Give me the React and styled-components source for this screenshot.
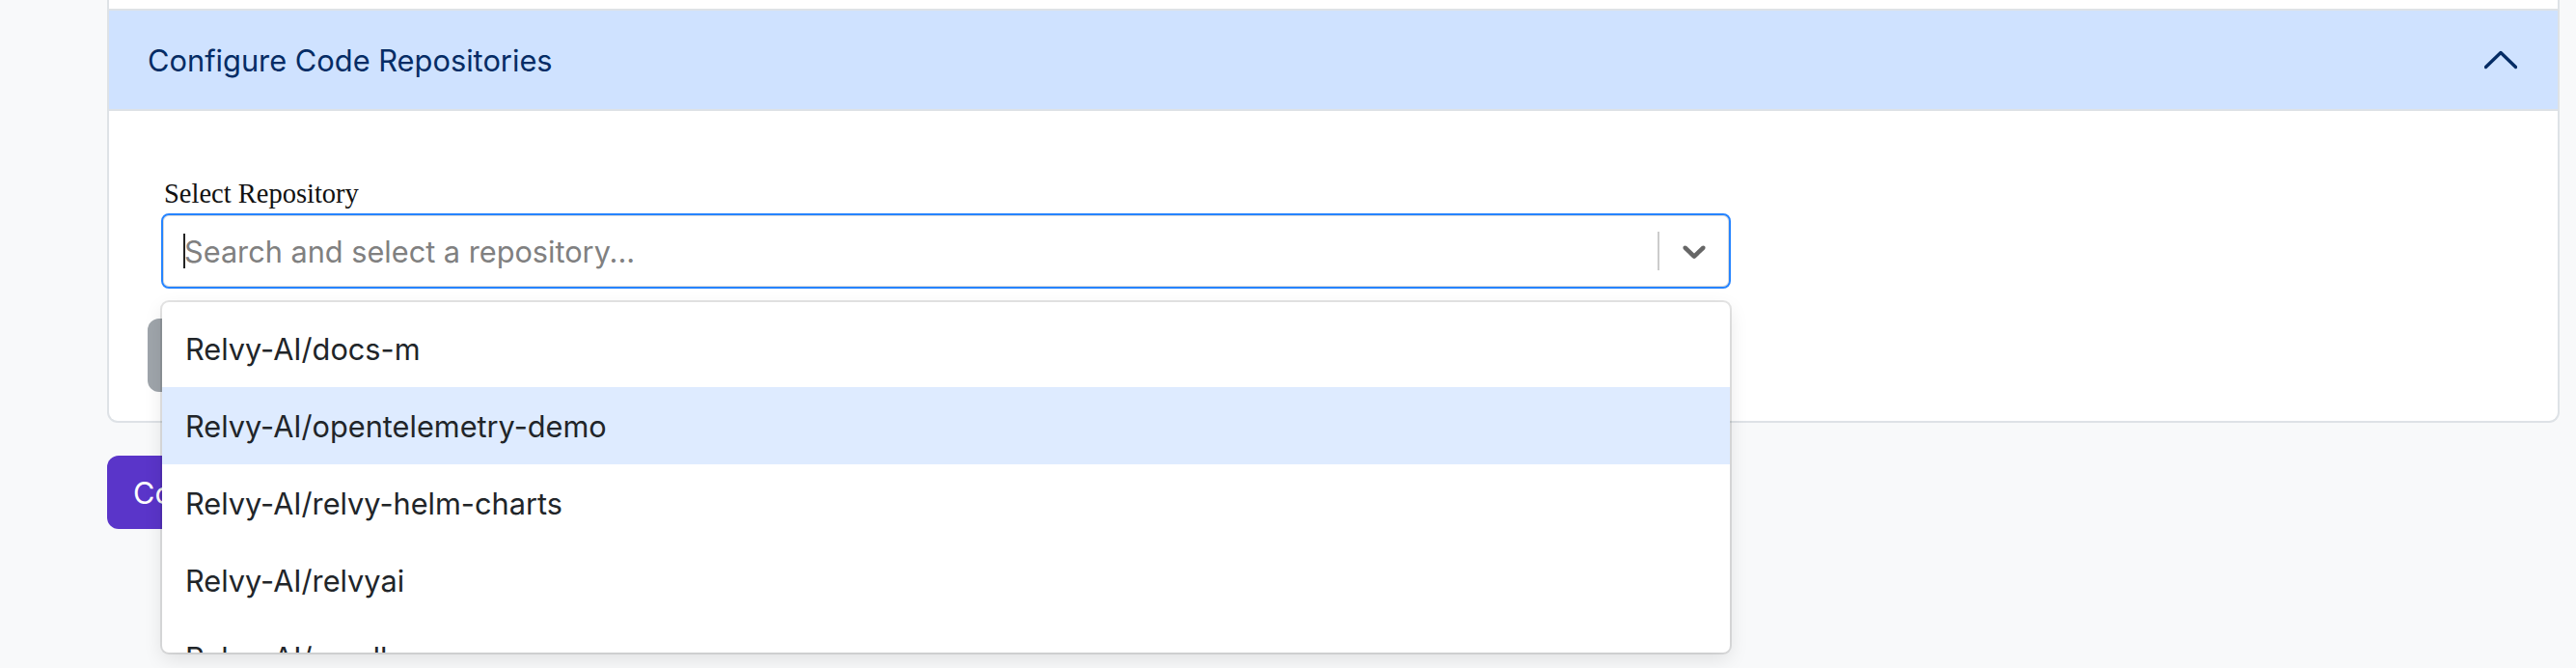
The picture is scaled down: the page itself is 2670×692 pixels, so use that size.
import React from 'react';
import styled, { createGlobalStyle } from 'styled-components';

// Page reset
const GlobalStyle = createGlobalStyle`
  html {
    overflow: hidden;
  }
  html, body {
    margin: 0;
    padding: 0;
    background: #f8f9fa;
  }
  body {
    min-height: 692px;
    font-family: Inter, "Noto Sans", sans-serif;
  }
`;

const Page = styled.div`
  padding: 0 17px 0 111px;
`;

// Accordion card (top of it is scrolled off screen)
const Accordion = styled.div`
  background: #ffffff;
  border: 2px solid #dee2e6;
  border-top: none;
  border-radius: 0 0 11px 11px;
`;

const PrevItemTail = styled.div`
  height: 9px;
`;

const ItemHeader = styled.div`
  display: flex;
  align-items: center;
  justify-content: space-between;
  height: 102px;
  padding: 0 42px 0 40px;
  background: #cfe2ff;
  border-top: 2px solid #dee2e6;
  border-bottom: 2px solid #dee2e6;
  color: #052c65;
  font-size: 30.8px;
`;

const ItemBody = styled.div`
  padding: 70px 40px 30px 40px;
`;

const FormGroup = styled.div`
  padding-left: 14px;
`;

const Label = styled.label`
  display: block;
  margin-bottom: 4px;
  padding-left: 3px;
  font-family: "Liberation Serif", serif;
  font-size: 28.5px;
  line-height: 32px;
  color: #111;
`;

// react-select look-alike
const SelectWrap = styled.div`
  position: relative;
  width: 1627px;
`;

const Control = styled.div`
  display: flex;
  align-items: stretch;
  height: 78px;
  box-sizing: border-box;
  border: 2px solid #2684ff;
  border-radius: 8px;
  box-shadow: inset 0 0 0 1px rgba(0, 0, 0, 0.14);
  background: #fff;
`;

const ValueContainer = styled.div`
  flex: 1;
  display: flex;
  align-items: center;
  padding-left: 21px;
`;

const Caret = styled.span`
  width: 2px;
  height: 36px;
  background: #222;
`;

const Placeholder = styled.span`
  margin-left: -1px;
  font-size: 30.7px;
  color: #808080;
`;

const Separator = styled.span`
  width: 2px;
  margin: 17px 0;
  background: #cccccc;
`;

const Indicator = styled.div`
  display: flex;
  align-items: center;
  padding: 0 16px;
  color: #666666;
`;

const Menu = styled.div`
  position: absolute;
  z-index: 10;
  top: calc(100% + 14px);
  left: 1px;
  right: 1px;
  height: 363px;
  box-sizing: border-box;
  padding-top: 8px;
  overflow: hidden;
  background: #fff;
  border-radius: 7px;
  box-shadow: 0 0 0 2px rgba(0, 0, 0, 0.1), 0 7px 20px rgba(0, 0, 0, 0.1);
`;

const Option = styled.div`
  display: flex;
  align-items: center;
  height: 80px;
  padding: 0 24px;
  font-size: 30.7px;
  color: #212529;
  background: ${(p) => (p.$focused ? '#deebff' : 'transparent')};
`;

const SaveButton = styled.button`
  display: block;
  width: 330px;
  height: 76px;
  margin-top: 31px;
  border: none;
  border-radius: 12px;
  background: #9fa5ab;
  color: #fff;
  font-family: inherit;
  font-size: 30px;
`;

const PrimaryButton = styled.button`
  margin-top: 34px;
  height: 76px;
  padding: 0 27px;
  border: none;
  border-radius: 12px;
  background: #5a35c9;
  color: #ffffff;
  font-family: inherit;
  font-size: 30.7px;
`;

const ChevronUp = () => (
  <svg width="34" height="20" viewBox="0 0 34 20" fill="none">
    <polyline points="1.5,17.5 17,2.5 32.5,17.5" stroke="#052c65" strokeWidth="3.4" strokeLinecap="round" strokeLinejoin="round" />
  </svg>
);

const ChevronDown = () => (
  <svg width="40" height="40" viewBox="0 0 20 20" fill="currentColor">
    <path d="M4.516 7.548c0.436-0.446 1.043-0.481 1.576 0l3.908 3.747 3.908-3.747c0.533-0.481 1.141-0.446 1.574 0 0.436 0.445 0.408 1.197 0 1.615-0.406 0.418-4.695 4.502-4.695 4.502-0.217 0.223-0.502 0.335-0.787 0.335s-0.57-0.112-0.789-0.335c0 0-4.287-4.084-4.695-4.502s-0.436-1.17 0-1.615z" />
  </svg>
);

const repos = [
  'Relvy-AI/docs-m',
  'Relvy-AI/opentelemetry-demo',
  'Relvy-AI/relvy-helm-charts',
  'Relvy-AI/relvyai',
  'Relvy-AI/sandbox',
];

const App = () => {
  return (
    <>
      <GlobalStyle />
      <Page>
        <Accordion>
          <PrevItemTail />
          <ItemHeader>
            <span>Configure Code Repositories</span>
            <ChevronUp />
          </ItemHeader>
          <ItemBody>
            <FormGroup>
              <Label>Select Repository</Label>
              <SelectWrap>
                <Control>
                  <ValueContainer>
                    <Caret />
                    <Placeholder>Search and select a repository...</Placeholder>
                  </ValueContainer>
                  <Separator />
                  <Indicator>
                    <ChevronDown />
                  </Indicator>
                </Control>
                <Menu>
                  {repos.map((name, i) => (
                    <Option key={name} $focused={i === 1}>
                      {name}
                    </Option>
                  ))}
                </Menu>
              </SelectWrap>
            </FormGroup>
            <SaveButton aria-label="Save" />
          </ItemBody>
        </Accordion>
        <PrimaryButton>Continue</PrimaryButton>
      </Page>
    </>
  );
};

export default App;
